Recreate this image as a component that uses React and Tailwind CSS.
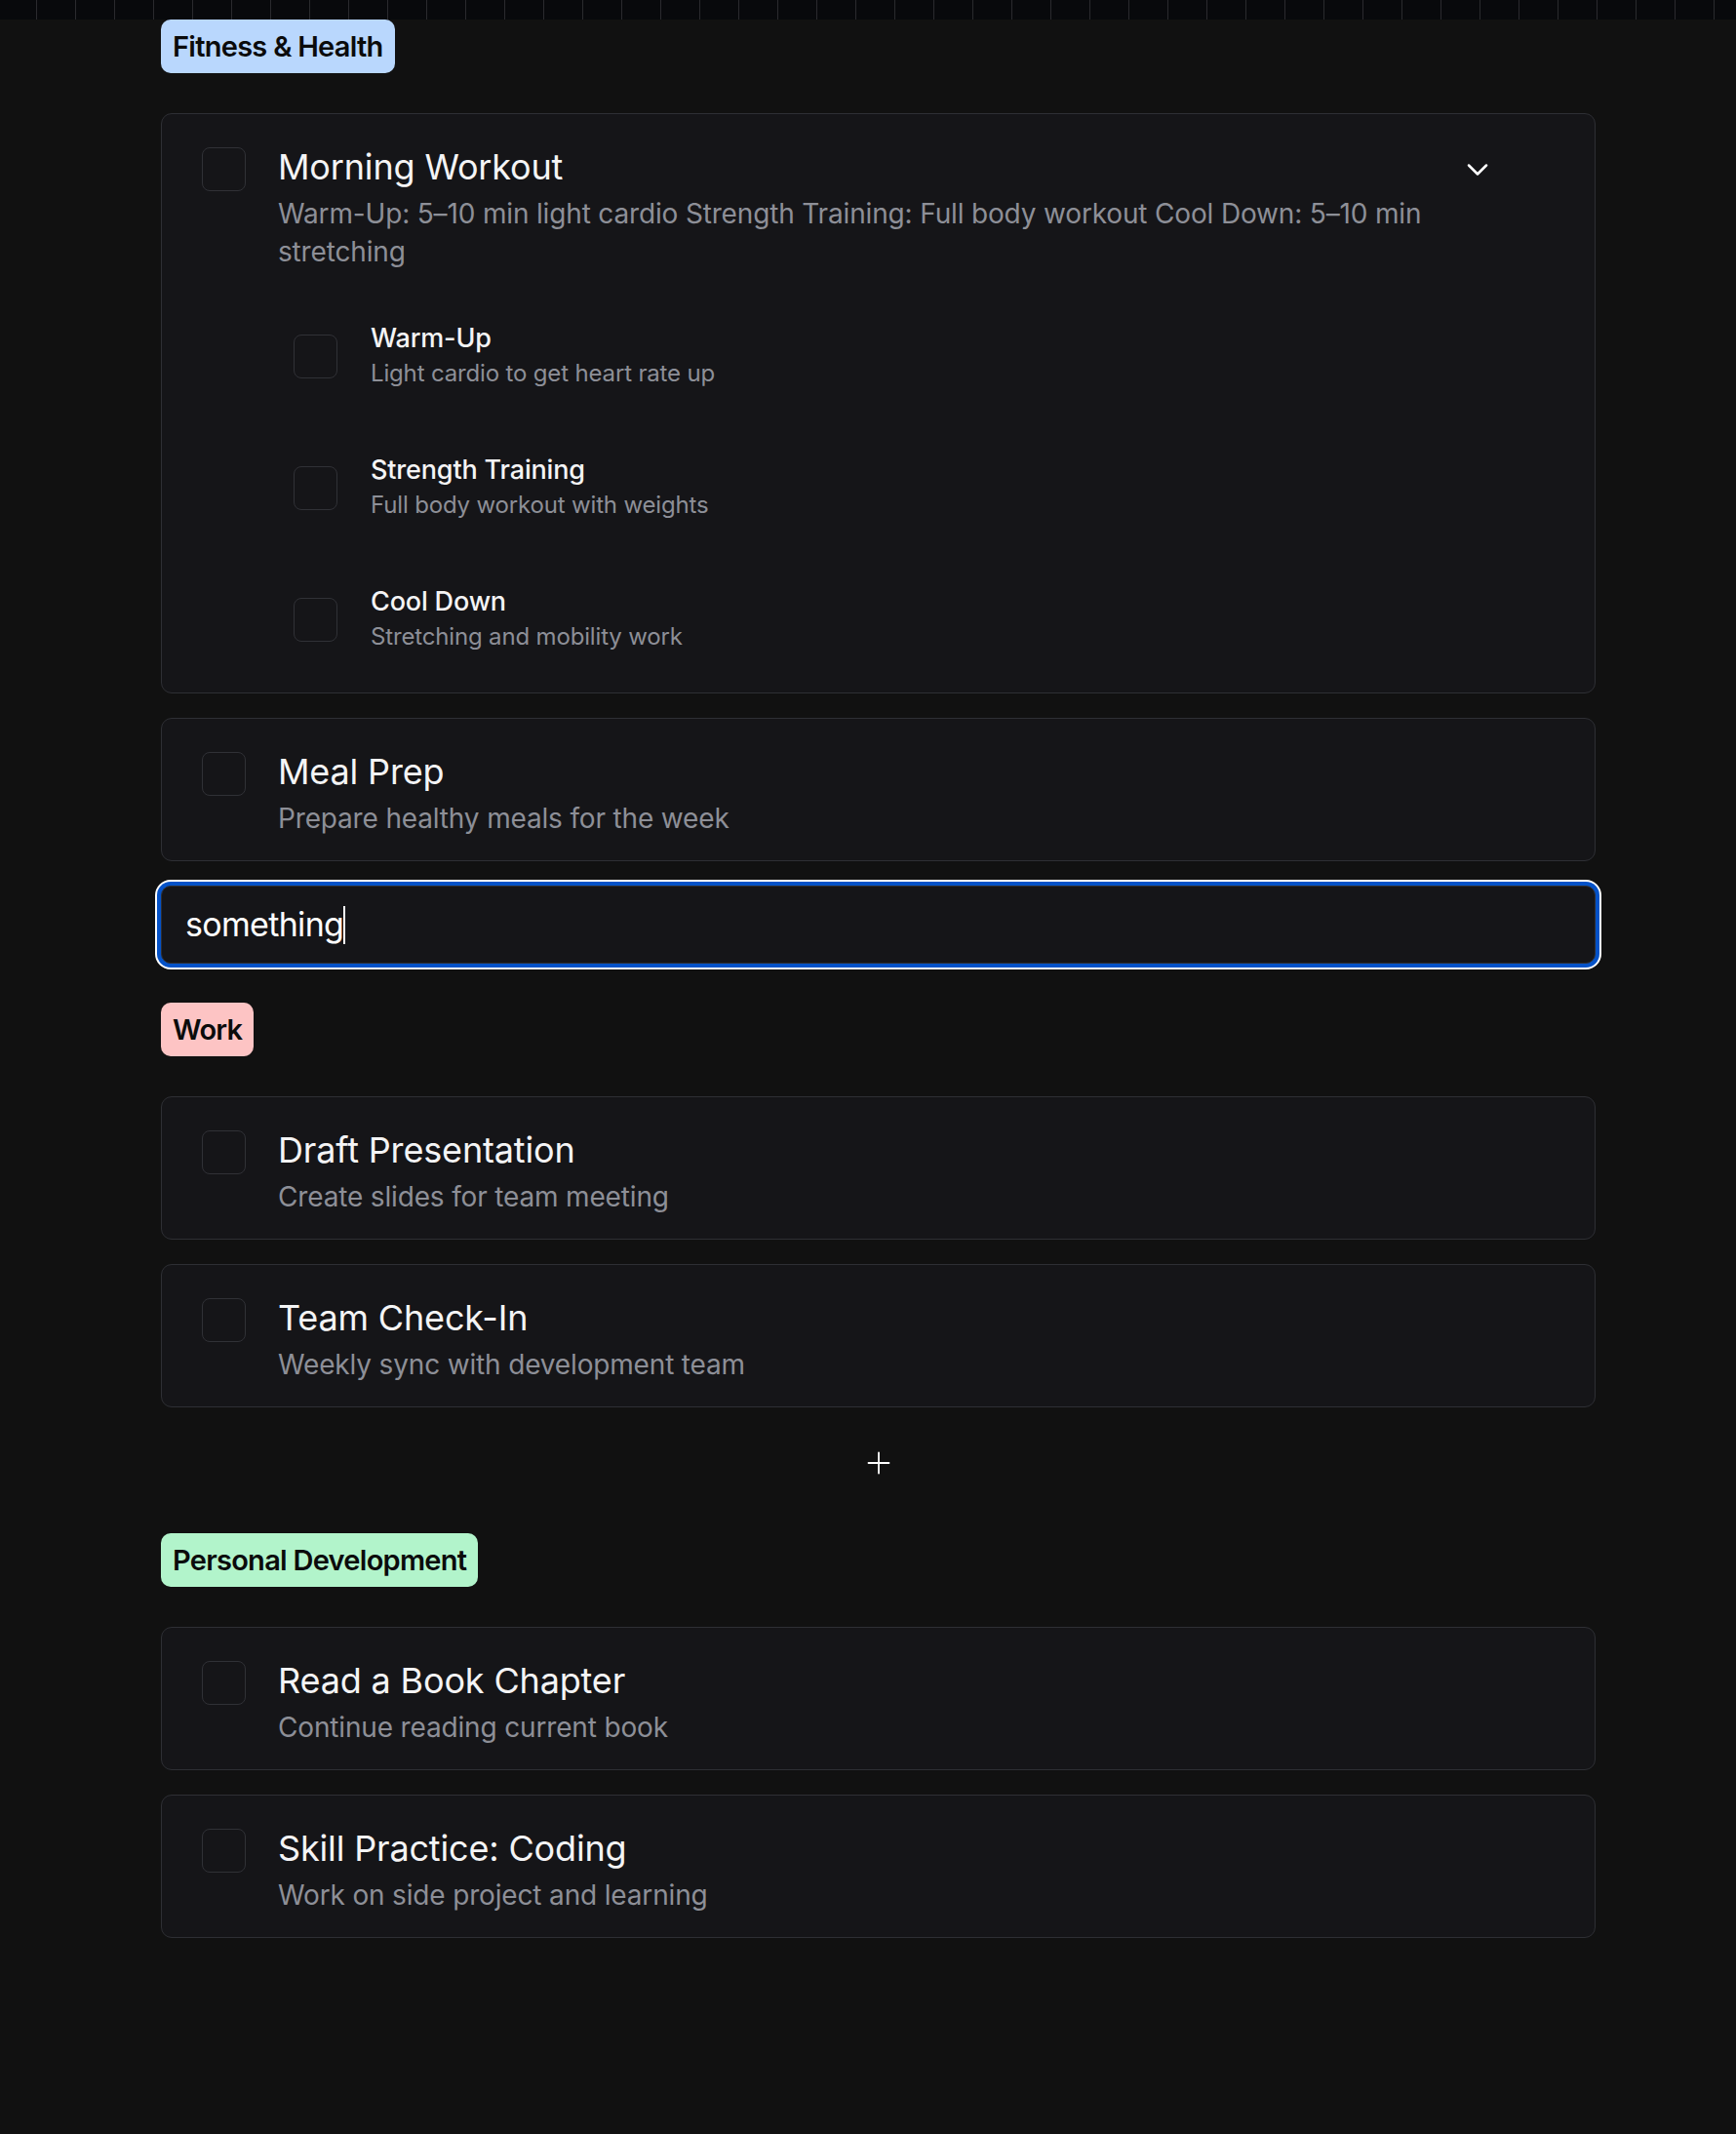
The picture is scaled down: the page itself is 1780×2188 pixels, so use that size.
import React from 'react';
import { ChevronDown, Plus } from 'lucide-react';

function Checkbox() {
  return <div className="h-[45px] w-[45px] shrink-0 rounded-[8px] border-[1.5px] border-[#303136]" />;
}

function Badge({ children, className }) {
  return (
    <div className={`flex h-[55px] items-center self-start rounded-[10px] px-[12px] text-[29px] font-semibold tracking-[-0.025em] text-[#0b0b0b] ${className}`}>
      {children}
    </div>
  );
}

function SubTask({ title, desc }) {
  return (
    <div className="flex items-center">
      <Checkbox />
      <div className="ml-[34px]">
        <div className="text-[27px] font-[550] leading-[32px] text-[#f4f4f5]">{title}</div>
        <div className="mt-[4px] text-[24px] leading-[32px] text-[#8d8f97]">{desc}</div>
      </div>
    </div>
  );
}

function TaskCard({ title, desc, subtasks, expandable }) {
  return (
    <div className="rounded-[11px] border border-[#2e2f34] bg-[#151518] pb-[23px] pl-[41px] pr-[41px] pt-[32px]">
      <div className="flex">
        <div className="mt-[2px]">
          <Checkbox />
        </div>
        <div className="ml-[33px] min-w-0 flex-1">
          <div className="text-[36px] leading-[44px] text-[#f4f4f5]">{title}</div>
          <div className="mt-[7px] text-[28px] leading-[39px] text-[#8d8f97]">{desc}</div>
          {subtasks && (
            <div className="mt-[53px] flex flex-col gap-[67px] pb-[18px] pl-[16px]">
              {subtasks.map((s) => (
                <SubTask key={s.title} title={s.title} desc={s.desc} />
              ))}
            </div>
          )}
        </div>
        {expandable && (
          <>
            <div className="flex h-[44px] w-[50px] items-center justify-center pt-[5px]">
              <ChevronDown size={36} strokeWidth={1.7} className="text-white" />
            </div>
            <div className="w-[54px]" />
          </>
        )}
      </div>
    </div>
  );
}

export default function App() {
  const cells = Array.from({ length: 46 });
  return (
    <div className="min-h-screen bg-[#111111] font-['Inter','Noto_Sans',sans-serif] tracking-[-0.01em]">
      <div className="flex h-[20px] overflow-hidden bg-[#08090c]">
        <div className="h-full w-[38px] shrink-0 border-r border-[#2a2a2e]" />
        {cells.map((_, i) => (
          <div key={i} className="h-full w-[40px] shrink-0 border-r border-[#2a2a2e]" />
        ))}
      </div>

      <div className="pb-[201px] pl-[165px]">
        <div className="flex w-[1471px] flex-col">
          {/* Fitness & Health */}
          <Badge className="bg-[#b9d7fd]">Fitness &amp; Health</Badge>
          <div className="mt-[41px] flex flex-col gap-[25px]">
            <TaskCard
              expandable
              title="Morning Workout"
              desc="Warm-Up: 5–10 min light cardio Strength Training: Full body workout Cool Down: 5–10 min stretching"
              subtasks={[
                { title: 'Warm-Up', desc: 'Light cardio to get heart rate up' },
                { title: 'Strength Training', desc: 'Full body workout with weights' },
                { title: 'Cool Down', desc: 'Stretching and mobility work' },
              ]}
            />
            <TaskCard title="Meal Prep" desc="Prepare healthy meals for the week" />
            <div className="flex h-[80px] items-center rounded-[10px] border border-[#2e2f34] bg-[#151518] pl-[24px] shadow-[0_0_0_4px_#0452c8,0_0_0_6px_#ffffff]">
              <span className="text-[34px] leading-[44px] tracking-[-0.02em] text-white">something</span>
              <span className="h-[39px] w-[2px] bg-white" />
            </div>
          </div>

          {/* Work */}
          <div className="mt-[40px] flex flex-col">
            <Badge className="bg-[#fdc4c4]">Work</Badge>
            <div className="mt-[41px] flex flex-col gap-[25px]">
              <TaskCard title="Draft Presentation" desc="Create slides for team meeting" />
              <TaskCard title="Team Check-In" desc="Weekly sync with development team" />
              <div className="flex h-[64px] items-center justify-center">
                <Plus size={36} strokeWidth={1.2} className="text-white" />
              </div>
            </div>
          </div>

          {/* Personal Development */}
          <div className="mt-[40px] flex flex-col">
            <Badge className="bg-[#b2f4cb]">Personal Development</Badge>
            <div className="mt-[41px] flex flex-col gap-[25px]">
              <TaskCard title="Read a Book Chapter" desc="Continue reading current book" />
              <TaskCard title="Skill Practice: Coding" desc="Work on side project and learning" />
            </div>
          </div>
        </div>
      </div>
    </div>
  );
}
